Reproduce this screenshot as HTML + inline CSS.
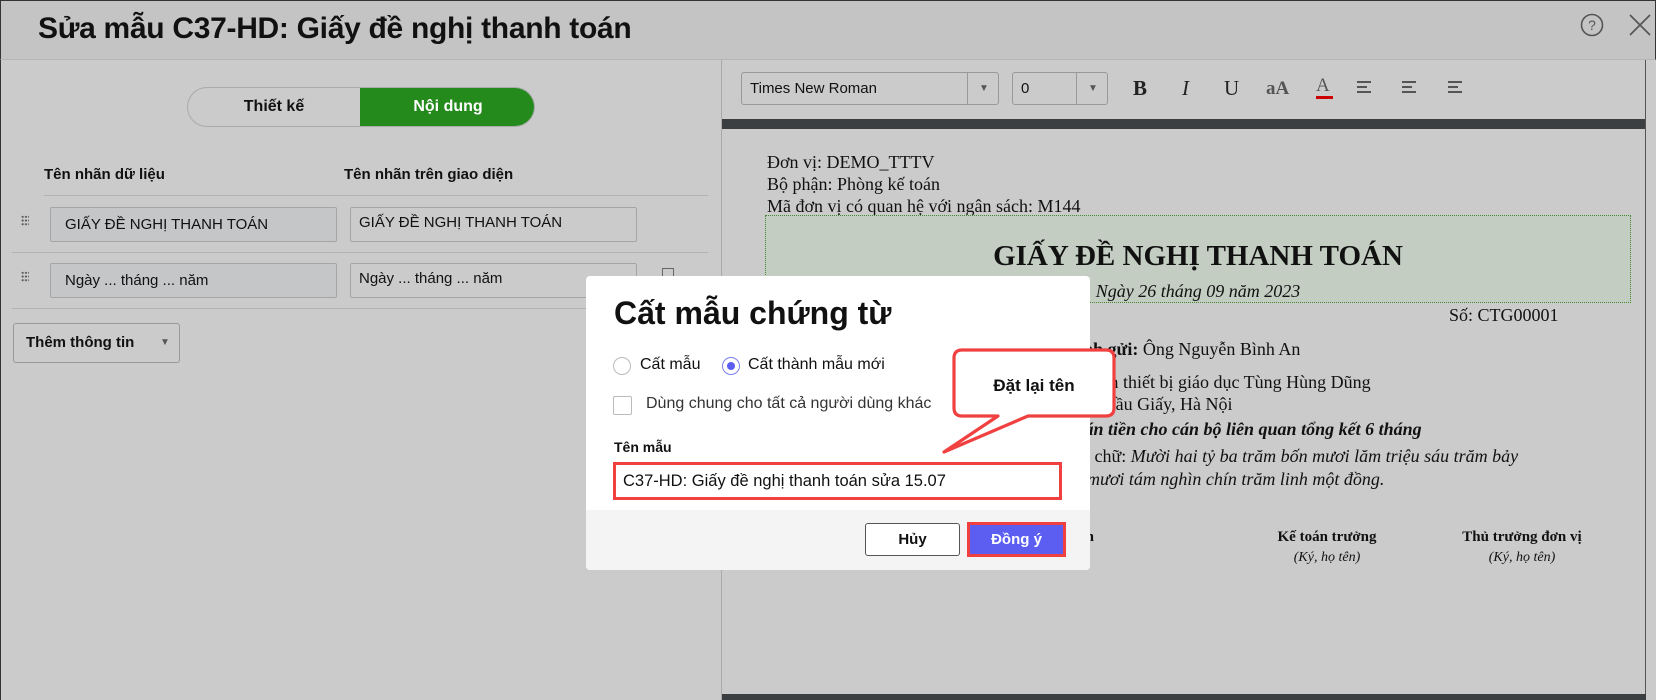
<!DOCTYPE html>
<html><head><meta charset="utf-8"><style>
*{box-sizing:border-box;margin:0;padding:0}
body{width:1656px;height:700px;overflow:hidden;background:#cbcbcb;font-family:"Liberation Sans",Arial,sans-serif;position:relative;color:#111}
.a{position:absolute}
.hdr{left:0;top:0;width:1656px;height:60px;background:#c4c4c4;border:1px solid #333;border-bottom:1px solid #b5b5b5}
.title{left:38px;top:12px;font-size:30px;font-weight:bold;color:#111;letter-spacing:-0.3px}
.inp{height:35px;border:1px solid #a5a5a5;border-radius:2px;font-size:15px;padding-left:14px;line-height:33px;background:#c5c6c8}
.inp2{background:#cbcbcb;padding-left:8px;line-height:30px}
.grip{width:8px;height:11px;background-image:radial-gradient(circle,#555 0.9px,transparent 1.2px);background-size:3.3px 3.7px}
.tnr{font-family:"Liberation Serif","Times New Roman",serif;font-size:18px;color:#111;white-space:nowrap}
.tb{font-family:"Liberation Serif",serif;font-size:21px;color:#222}
.al{width:14px;height:12px;border-top:2px solid #555;border-bottom:2px solid #555}
.al:after{content:"";position:absolute;top:3px;height:2px;background:#555;width:10px;left:0}
</style></head><body>
<div class="a hdr"></div>
<div class="a title">Sửa mẫu C37‑HD: Giấy đề nghị thanh toán</div>
<svg class="a" style="left:1580px;top:13px" width="24" height="24"><circle cx="12" cy="12" r="10.5" fill="none" stroke="#555" stroke-width="1.6"/><text x="12" y="17" font-size="14" text-anchor="middle" fill="#555" font-family="Liberation Sans">?</text></svg>
<svg class="a" style="left:1628px;top:13px" width="24" height="24"><path d="M2 2L22 22M22 2L2 22" stroke="#555" stroke-width="1.7"/></svg>
<div class="a" style="left:0;top:60px;width:1px;height:640px;background:#333"></div>

<!-- left panel -->
<div class="a" style="left:187px;top:87px;width:348px;height:40px;border:1px solid #aaa;border-radius:20px;overflow:hidden;background:#cbcbcb">
 <div class="a" style="left:0;top:0;width:172px;height:38px;line-height:38px;text-align:center;font-weight:bold;font-size:16px">Thiết kế</div>
 <div class="a" style="left:172px;top:-1px;width:176px;height:40px;line-height:40px;text-align:center;font-weight:bold;font-size:16px;background:#248a1c;color:#fff;border-radius:0 20px 20px 0">Nội dung</div>
</div>
<div class="a" style="left:44px;top:166px;font-size:15px;font-weight:bold">Tên nhãn dữ liệu</div>
<div class="a" style="left:344px;top:166px;font-size:15px;font-weight:bold">Tên nhãn trên giao diện</div>
<div class="a" style="left:44px;top:195px;width:664px;height:1px;background:#b3b3b3"></div>
<div class="a grip" style="left:21px;top:215px"></div>
<div class="a inp" style="left:50px;top:207px;width:287px">GIẤY ĐỀ NGHỊ THANH TOÁN</div>
<div class="a inp inp2" style="left:350px;top:207px;width:287px">GIẤY ĐỀ NGHỊ THANH TOÁN</div>
<div class="a" style="left:12px;top:252px;width:696px;height:1px;background:#b3b3b3"></div>
<div class="a grip" style="left:21px;top:271px"></div>
<div class="a inp" style="left:50px;top:263px;width:287px">Ngày ... tháng ... năm</div>
<div class="a inp inp2" style="left:350px;top:263px;width:287px">Ngày ... tháng ... năm</div>
<div class="a" style="left:662px;top:268px;width:12px;height:8px;border:1.5px solid #666;border-bottom:none"></div>
<div class="a" style="left:12px;top:308px;width:696px;height:1px;background:#b3b3b3"></div>
<div class="a" style="left:13px;top:323px;width:167px;height:40px;border:1px solid #999;border-radius:3px;font-size:15px;font-weight:bold;line-height:38px;padding-left:12px">Thêm thông tin<span style="position:absolute;left:146px;font-size:10px;color:#555;font-weight:normal">▼</span></div>

<!-- right panel -->
<div class="a" style="left:721px;top:60px;width:1px;height:640px;background:#aaa"></div>
<div class="a" style="left:722px;top:60px;width:924px;height:60px;background:#cbcbcb"></div>
<div class="a" style="left:741px;top:72px;width:258px;height:33px;border:1px solid #999;border-radius:3px;font-size:15px;line-height:31px;padding-left:8px">Times New Roman<div class="a" style="left:225px;top:0;width:1px;height:31px;background:#999"></div><span class="a" style="left:237px;font-size:10px;color:#555">▼</span></div>
<div class="a" style="left:1012px;top:72px;width:96px;height:33px;border:1px solid #999;border-radius:3px;font-size:15px;line-height:31px;padding-left:8px">0<div class="a" style="left:63px;top:0;width:1px;height:31px;background:#999"></div><span class="a" style="left:75px;font-size:10px;color:#555">▼</span></div>
<div class="a tb" style="left:1133px;top:76px;font-weight:bold">B</div>
<div class="a tb" style="left:1182px;top:76px;font-style:italic">I</div>
<div class="a tb" style="left:1224px;top:76px">U</div>
<div class="a tb" style="left:1266px;top:78px;font-weight:bold;color:#555;font-size:19px">aA</div>
<div class="a tb" style="left:1316px;top:75px;color:#555;font-size:19px">A</div>
<div class="a" style="left:1316px;top:96px;width:17px;height:3px;background:#c00"></div>
<div class="a al" style="left:1357px;top:81px"></div>
<div class="a al" style="left:1402px;top:81px"></div>
<div class="a al" style="left:1448px;top:81px"></div>
<div class="a" style="left:722px;top:119px;width:924px;height:10px;background:#3c3f42"></div>
<div class="a" style="left:1645px;top:60px;width:1px;height:640px;background:#555"></div>
<div class="a" style="left:722px;top:694px;width:924px;height:6px;background:#3c3f42"></div>

<div class="a tnr" style="left:767px;top:152px">Đơn vị: DEMO_TTTV</div>
<div class="a tnr" style="left:767px;top:174px">Bộ phận: Phòng kế toán</div>
<div class="a tnr" style="left:767px;top:196px">Mã đơn vị có quan hệ với ngân sách: M144</div>
<div class="a" style="left:765px;top:215px;width:866px;height:88px;background:#c3cdc2;border:1.5px dotted #3f8a2f"></div>
<div class="a tnr" style="left:765px;top:240px;width:866px;text-align:center;font-size:29px;font-weight:bold">GIẤY ĐỀ NGHỊ THANH TOÁN</div>
<div class="a tnr" style="left:765px;top:281px;width:866px;text-align:center;font-style:italic">Ngày 26 tháng 09 năm 2023</div>
<div class="a tnr" style="left:1449px;top:305px">Số: CTG00001</div>
<div class="a tnr" style="left:1064px;top:339px"><b>Kính gửi:</b> Ông Nguyễn Bình An</div>
<div class="a tnr" style="left:1000px;top:372px">Công ty cổ phần thiết bị giáo dục Tùng Hùng Dũng</div>
<div class="a tnr" style="left:988px;top:394px">Phố Vọng Hậu, Cầu Giấy, Hà Nội</div>
<div class="a tnr" style="left:1016px;top:419px;font-weight:bold;font-style:italic">Thanh toán tiền cho cán bộ liên quan tổng kết 6 tháng</div>
<div class="a tnr" style="left:1000px;top:446px">Số tiền bằng chữ: <i>Mười hai tỷ ba trăm bốn mươi lăm triệu sáu trăm bảy</i></div>
<div class="a tnr" style="left:1087px;top:469px;font-style:italic">mươi tám nghìn chín trăm linh một đồng.</div>
<div class="a tnr" style="left:794px;top:529px;font-size:15px;font-weight:bold;width:300px;text-align:right">Người lập biểu, đề nghị thanh toán</div>
<div class="a tnr" style="left:1252px;top:529px;font-size:15px;font-weight:bold;width:150px;text-align:center">Kế toán trưởng</div>
<div class="a tnr" style="left:1252px;top:550px;font-size:14px;font-style:italic;width:150px;text-align:center">(Ký, họ tên)</div>
<div class="a tnr" style="left:1447px;top:529px;font-size:15px;font-weight:bold;width:150px;text-align:center">Thủ trưởng đơn vị</div>
<div class="a tnr" style="left:1447px;top:550px;font-size:14px;font-style:italic;width:150px;text-align:center">(Ký, họ tên)</div>

<!-- dialog -->
<div class="a" style="left:586px;top:276px;width:504px;height:294px;background:#fff;border-radius:4px;overflow:hidden">
 <div class="a" style="left:28px;top:19px;font-size:32px;font-weight:bold;color:#111">Cất mẫu chứng từ</div>
 <div class="a" style="left:27px;top:81px;width:18px;height:18px;border:1px solid #bbb;border-radius:50%"></div>
 <div class="a" style="left:54px;top:80px;font-size:16px">Cất mẫu</div>
 <div class="a" style="left:136px;top:81px;width:18px;height:18px;border:1px solid #7b7ff0;border-radius:50%"><div class="a" style="left:4px;top:4px;width:8px;height:8px;background:#5b5ef0;border-radius:50%"></div></div>
 <div class="a" style="left:162px;top:80px;font-size:16px">Cất thành mẫu mới</div>
 <div class="a" style="left:27px;top:120px;width:19px;height:19px;border:1px solid #bbb;border-radius:2px"></div>
 <div class="a" style="left:60px;top:119px;font-size:16px;color:#333">Dùng chung cho tất cả người dùng khác</div>
 <div class="a" style="left:28px;top:163px;font-size:14px;font-weight:bold">Tên mẫu</div>
 <div class="a" style="left:27px;top:186px;width:449px;height:38px;border:3px solid #f04040;font-size:16.5px;line-height:32px;padding-left:7px;color:#111">C37‑HD: Giấy đề nghị thanh toán sửa 15.07</div>
 <div class="a" style="left:0;top:234px;width:504px;height:60px;background:#f4f4f4"></div>
 <div class="a" style="left:279px;top:247px;width:95px;height:33px;border:1px solid #555;border-radius:3px;background:#fff;text-align:center;line-height:31px;font-size:15px;font-weight:bold">Hủy</div>
 <div class="a" style="left:381px;top:246px;width:99px;height:35px;border:3px solid #f04040;background:#5b5ef0;color:#fff;text-align:center;line-height:29px;font-size:15px;font-weight:bold">Đồng ý</div>
</div>
<!-- callout -->
<svg class="a" style="left:940px;top:345px" width="180" height="112">
 <path d="M22 5 H166 Q174 5 174 13 V63 Q174 71 166 71 H88 L4 107 L58 71 H22 Q14 71 14 63 V13 Q14 5 22 5 Z" fill="#fff" stroke="#f04040" stroke-width="3.2" stroke-linejoin="round"/>
 <text x="94" y="46" font-family="Liberation Sans" font-weight="bold" font-size="17" text-anchor="middle" fill="#111">Đặt lại tên</text>
</svg>
</body></html>
